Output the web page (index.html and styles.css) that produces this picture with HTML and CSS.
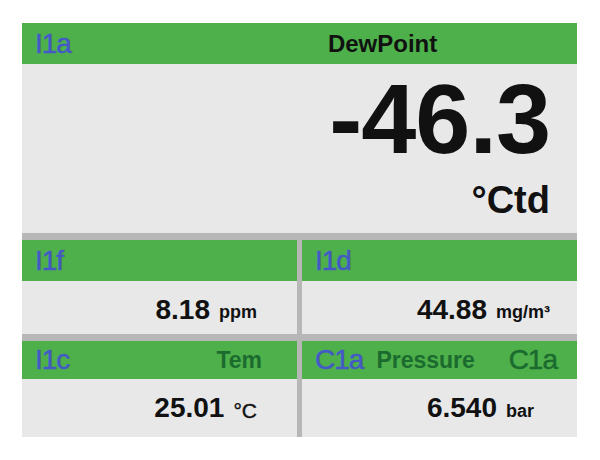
FILE: index.html
```html
<!DOCTYPE html>
<html lang="en">

<head>
    <meta charset="UTF-8">
    <meta name="viewport" content="width=device-width, initial-scale=1.0">
    <title>DewPoint Display</title>
    <link rel="stylesheet" href="styles.css">
</head>

<body>
    <div id="screen">
        <!-- Main reading -->
        <div class="main-reading">
            <div class="bar main-bar">
                <span class="tag">I1a</span>
                <span class="main-title">DewPoint</span>
            </div>
            <div class="main-body">
                <div class="big-value">-46.3</div>
                <div class="big-unit">°Ctd</div>
            </div>
        </div>

        <!-- Secondary readings -->
        <div class="cells">
            <div class="cell">
                <div class="bar"><span class="tag">I1f</span></div>
                <div class="cell-body pad-a"><span class="num">8.18</span><span class="unit">ppm</span></div>
            </div>
            <div class="cell">
                <div class="bar"><span class="tag">I1d</span></div>
                <div class="cell-body pad-b"><span class="num">44.88</span><span class="unit">mg/m³</span></div>
            </div>
            <div class="cell">
                <div class="bar">
                    <span class="tag">I1c</span>
                    <span class="name name-tem">Tem</span>
                </div>
                <div class="cell-body pad-a"><span class="num">25.01</span><span class="unit deg">°C</span></div>
            </div>
            <div class="cell">
                <div class="bar">
                    <span class="tag">C1a</span>
                    <span class="name">Pressure</span>
                    <span class="tag tag-green">C1a</span>
                </div>
                <div class="cell-body pad-c"><span class="num">6.540</span><span class="unit">bar</span></div>
            </div>
        </div>
    </div>
</body>

</html>
```

FILE: styles.css
```css
/* Global Styles */
* {
    box-sizing: border-box;
    margin: 0;
    padding: 0;
}

body {
    font-family: 'Liberation Sans', Arial, sans-serif;
    background: #ffffff;
    color: #111;
}

#screen {
    width: 555px;
    margin: 23px 0 0 22px;
    background: #e8e8e9;
}

/* Green header bars */
.bar {
    height: 41px;
    background: #4db04a;
    display: flex;
    align-items: center;
    padding: 0 13px;
}

.tag {
    font-size: 28px;
    color: #4459c6;
    letter-spacing: -1px;
    -webkit-text-stroke: 0.5px currentColor;
}

.tag-green {
    color: #1b6b2f;
    margin-left: auto;
    margin-right: 7px;
}

.name {
    font-size: 23px;
    font-weight: bold;
    color: #1b6b2f;
    margin-left: 13px;
}

.name-tem {
    margin-left: auto;
    margin-right: 22px;
}

/* Main reading */
.main-title {
    font-size: 24px;
    font-weight: bold;
    color: #111;
    margin-left: 257px;
}

.main-body {
    height: 169px;
    text-align: right;
    padding: 10px 27px 0 0;
}

.big-value {
    font-size: 99px;
    font-weight: bold;
    line-height: 90px;
    letter-spacing: -1px;
}

.big-unit {
    font-size: 38px;
    font-weight: bold;
    line-height: 40px;
    margin-top: 16px;
}

/* Cells */
.cells {
    display: grid;
    grid-template-columns: 1fr 1fr;
    column-gap: 5px;
    row-gap: 7px;
    padding-top: 7px;
    background: #b7b7b7;
}

.cell {
    background: #e8e8e9;
}

.cell-body {
    height: 53px;
    display: flex;
    justify-content: flex-end;
    align-items: center;
    padding-top: 4px;
}

.cell:nth-child(n+3) .bar {
    height: 38px;
}

.cell:nth-child(n+3) .cell-body {
    height: 58px;
    padding-top: 0;
}

.pad-a {
    padding-right: 40px;
}

.pad-b {
    padding-right: 27px;
}

.pad-c {
    padding-right: 43px;
}

.num {
    font-size: 28px;
    font-weight: bold;
}

.unit {
    font-size: 18px;
    font-weight: bold;
    margin-left: 9px;
    padding-top: 6px;
}

.unit.deg {
    font-size: 21px;
    font-weight: normal;
    -webkit-text-stroke: 0.4px currentColor;
}
```
